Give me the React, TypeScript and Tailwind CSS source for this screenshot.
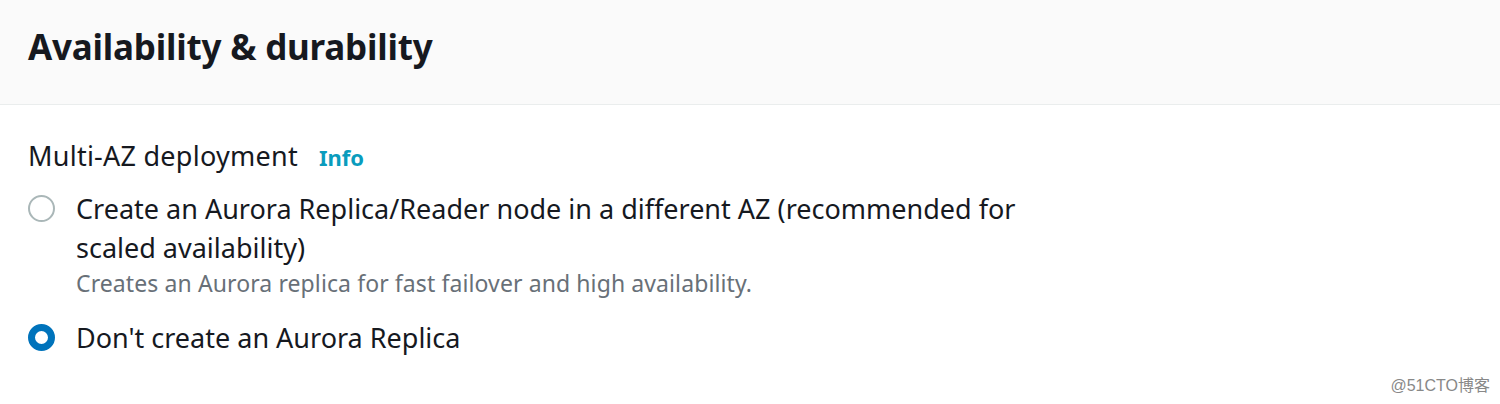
const font = { fontFamily: '"Noto Sans", "Liberation Sans", sans-serif' };

const Radio = ({ checked }: { checked: boolean }) =>
  checked ? (
    <span className="mt-[6px] box-border block h-[27px] w-[27px] shrink-0 rounded-full border-[7px] border-[#0073bb] bg-white" />
  ) : (
    <span className="mt-[6px] box-border block h-[27px] w-[27px] shrink-0 rounded-full border-2 border-[#aab7b8] bg-white" />
  );

const App = () => {
  return (
    <div className="relative h-[404px] w-[1500px] overflow-hidden bg-white text-[#16191f]" style={font}>
      {/* header */}
      <div className="flex h-[105px] items-center border-b border-[#eaeded] bg-[#fafafa] px-7 pb-[10px]">
        <h2 className="text-[35px] font-bold tracking-[-0.2px]">Availability &amp; durability</h2>
      </div>

      <div className="px-7 pt-[34px]">
        <div className="flex items-baseline gap-[21px]">
          <span className="text-[27px] leading-[34px] tracking-[0.25px]">Multi-AZ deployment</span>
          <span className="text-[22px] font-bold text-[#0a9cbd]">Info</span>
        </div>

        <div className="mt-[15px] flex items-start gap-[21px]">
          <Radio checked={false} />
          <div className="w-[960px]">
            <div className="text-[27px] leading-[39px]">
              Create an Aurora Replica/Reader node in a different AZ (recommended for scaled availability)
            </div>
            <div className="text-[23px] leading-[32px] tracking-[0.1px] text-[#687078]">
              Creates an Aurora replica for fast failover and high availability.
            </div>
          </div>
        </div>

        <div className="mt-[19px] flex items-start gap-[21px]">
          <Radio checked />
          <div className="text-[27px] leading-[39px]">Don't create an Aurora Replica</div>
        </div>
      </div>

      <div
        className="absolute bottom-[6px] right-[10px] text-[16px] text-[#888]"
        style={{ fontFamily: '"Liberation Sans", "Noto Sans CJK SC", sans-serif' }}
      >
        @51CTO博客
      </div>
    </div>
  );
};

export default App;
